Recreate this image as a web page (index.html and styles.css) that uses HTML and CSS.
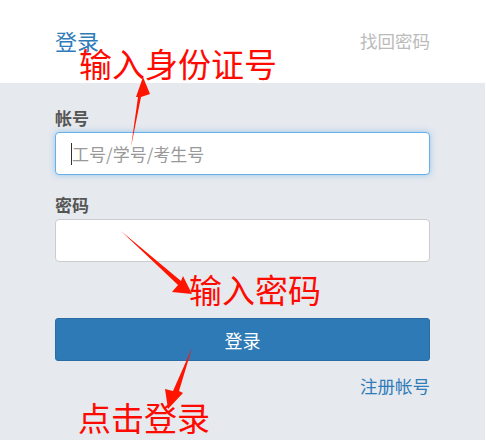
FILE: index.html
```html
<!DOCTYPE html>
<html lang="zh-CN">
<head>
    <meta charset="UTF-8">
    <meta name="viewport" content="width=device-width, initial-scale=1.0">
    <title>登录</title>
    <link rel="stylesheet" href="styles.css">
</head>
<body>
    <div class="page">
        <!-- 顶部 -->
        <div class="header">
            <span class="title">登录</span>
            <a class="forgot" href="#">找回密码</a>
        </div>

        <!-- 表单 -->
        <div class="panel">
            <label class="label" for="account">帐号</label>
            <div class="field-focus">
                <input class="input focus" id="account" type="text" placeholder="工号/学号/考生号">
            </div>

            <label class="label" for="password">密码</label>
            <input class="input" id="password" type="password">

            <button class="btn">登录</button>
            <div class="links"><a href="#">注册帐号</a></div>
        </div>

        <!-- 标注 -->
        <div class="note note1">输入身份证号</div>
        <div class="note note2">输入密码</div>
        <div class="note note3">点击登录</div>
        <svg class="arrows" width="486" height="440" viewBox="0 0 486 440">
            <polygon points="131,147 141,97 150,94 143,77 136,97 138,97"/>
            <polygon points="121,231 181,281 183,276 192,294 172,292 178,285"/>
            <polygon points="192,348 179,391 183,393 168,409 165,389 173,391"/>
        </svg>
    </div>
</body>
</html>
```

FILE: styles.css
```css
body {
    margin: 0;
    background: #fff;
    font-family: "Noto Sans CJK SC", "Noto Sans", sans-serif;
    color: #555;
}
.page {
    position: relative;
    width: 485px;
    height: 440px;
    display: flex;
    flex-direction: column;
    overflow: hidden;
}
.header {
    height: 83px;
    box-sizing: border-box;
    padding: 26px 55px 0;
    display: flex;
    justify-content: space-between;
    align-items: flex-start;
}
.title {
    font-size: 22px;
    line-height: 28px;
    color: #2f7cba;
}
.forgot {
    margin-top: 4px;
    font-size: 17.5px;
    line-height: 22px;
    color: #bbb;
    text-decoration: none;
}
.panel {
    flex: 1;
    background: #e6e9ee;
    padding: 24px 55px 0;
    display: flex;
    flex-direction: column;
}
.label {
    font-size: 17px;
    line-height: 22px;
    font-weight: bold;
    color: #555;
    margin-bottom: 3px;
}
.label + .input {
    margin-top: 0;
}
.field-focus {
    position: relative;
    margin-bottom: 19px;
}
.field-focus::after {
    content: "";
    position: absolute;
    left: 16px;
    top: 11px;
    width: 1px;
    height: 22px;
    background: #333;
}
.input {
    box-sizing: border-box;
    width: 375px;
    height: 43px;
    padding: 0 16px;
    border: 1px solid #ccc;
    border-radius: 4px;
    background: #fff;
    font-family: inherit;
    font-size: 17px;
    outline: none;
}
.input::placeholder {
    color: #999;
}
.input.focus {
    border-color: #66afe9;
    box-shadow: 0 0 6px rgba(102, 175, 233, 0.6);
}
.btn {
    margin-top: 56px;
    width: 375px;
    height: 43px;
    border: 1px solid #2a6ca3;
    border-radius: 3px;
    background: #2e7ab6;
    color: #fff;
    font-family: inherit;
    font-size: 18px;
    cursor: pointer;
}
.links {
    margin-top: 13px;
    text-align: right;
    font-size: 17.5px;
    line-height: 24px;
}
.links a {
    color: #2f7cba;
    text-decoration: none;
}

/* 红色标注 */
.note {
    position: absolute;
    color: #ff0a00;
    font-size: 33px;
    line-height: 1;
    white-space: nowrap;
}
.note1 { left: 79px; top: 47px; }
.note2 { left: 189px; top: 273px; }
.note3 { left: 78px; top: 401px; }
.arrows {
    position: absolute;
    left: 0;
    top: 0;
    fill: #ff1400;
}
```
